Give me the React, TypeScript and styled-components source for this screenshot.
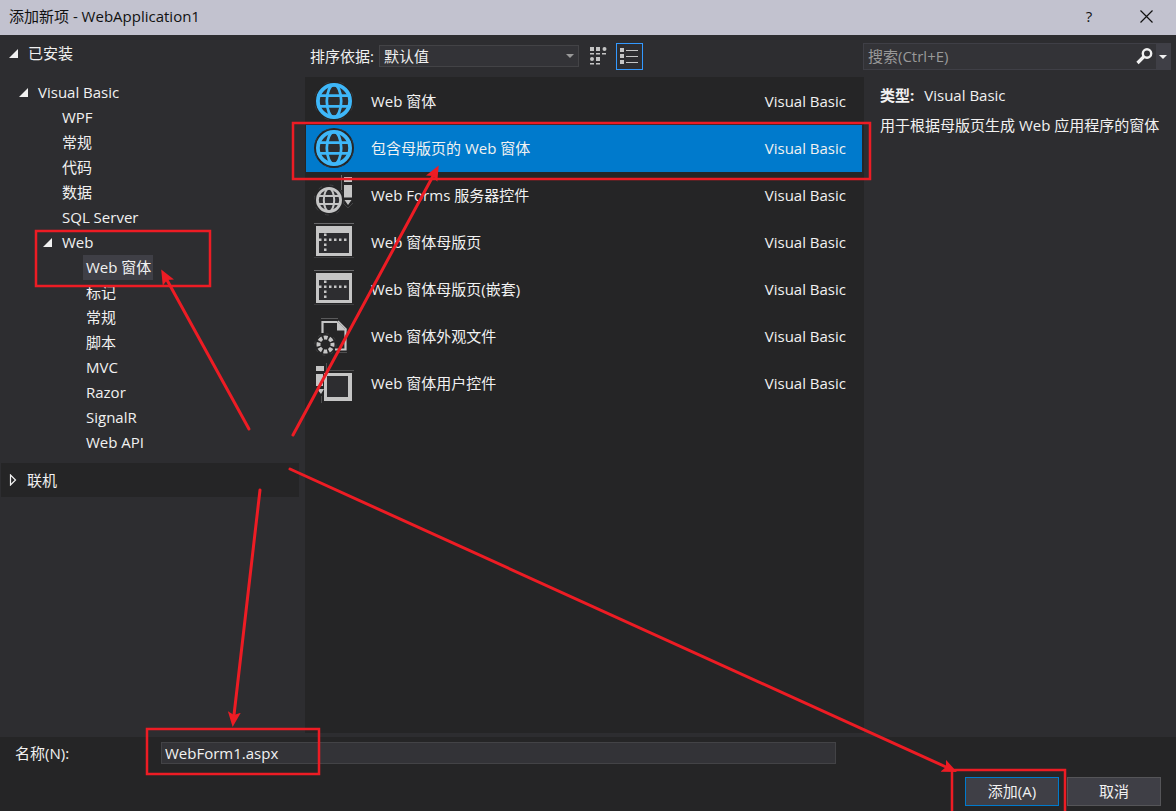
import React, { useState } from "react";
import styled, { createGlobalStyle } from "styled-components";

const GlobalStyle = createGlobalStyle`
  *, *::before, *::after { box-sizing: border-box; }
  body {
    margin: 0;
    background: #2d2d30;
    color: #f1f1f1;
    font: 15px/25px "Open Sans", "Noto Sans CJK SC", sans-serif;
  }
  button, input, select { font: inherit; color: inherit; }
  ul { list-style: none; margin: 0; padding: 0; }
  p { margin: 0; }
`;

const Dialog = styled.div`
  position: relative;
  display: flex;
  flex-direction: column;
  min-height: 100vh;
`;

const TitleBar = styled.header`
  display: flex;
  align-items: center;
  height: 35px;
  padding: 0 12px 2px 9px;
  background: #c2c2cf;
  color: #111;
`;

const Title = styled.h1`
  flex: 1;
  margin: 0;
  font-size: 15px;
  font-weight: 400;
`;

const CaptionButton = styled.button`
  display: grid;
  place-items: center;
  width: 36px;
  height: 32px;
  margin-left: 21px;
  padding: 0;
  border: 0;
  background: none;
`;

const Body = styled.main`
  flex: 1;
  display: grid;
  grid-template-columns: 305px minmax(0, 1fr) 313px;
  padding-bottom: 4px;
`;

const Sidebar = styled.nav`
  padding: 6px 6px 0 1px;
`;

const Tree = styled.ul`
  margin: 14px 0 8px;
`;

const TreeRow = styled.button<{ $indent: number }>`
  display: flex;
  align-items: center;
  height: 25px;
  padding: 0 0 0 ${(p) => p.$indent}px;
  border: 0;
  background: none;
  white-space: nowrap;
`;

const ArrowSlot = styled.span`
  display: flex;
  width: 16px;
`;

const TreeLabel = styled.span<{ $selected?: boolean }>`
  padding: 0 2px 0 3px;
  background: ${(p) => (p.$selected ? "#3f3f46" : "transparent")};
`;

const OnlineRow = styled.button`
  display: flex;
  align-items: center;
  width: 100%;
  height: 34px;
  padding: 0 0 0 7px;
  border: 0;
  background: #252526;
`;

const Center = styled.section`
  display: flex;
  flex-direction: column;
`;

const Toolbar = styled.div`
  display: flex;
  align-items: center;
  height: 42px;
  padding-left: 5px;
`;

const SelectBox = styled.div`
  position: relative;
  width: 200px;
  margin: 0 6px 0 5px;
  svg { position: absolute; right: 5px; top: 9px; pointer-events: none; }
`;

const Select = styled.select`
  display: block;
  appearance: none;
  width: 100%;
  height: 22px;
  padding: 0 20px 0 4px;
  border: 1px solid #434346;
  border-radius: 0;
  background: #333337;
  line-height: 20px;
`;

const ViewButton = styled.button<{ $active: boolean }>`
  display: grid;
  place-items: center;
  width: 27px;
  height: 27px;
  margin-right: 4px;
  padding: 0;
  border: 1px solid ${(p) => (p.$active ? "#3399ff" : "transparent")};
  background: none;
`;

const Templates = styled.ul`
  flex: 1;
  margin-right: -1px;
  padding: 1px 2px 0 1px;
  background: #252526;
`;

const TemplateRow = styled.button<{ $selected: boolean }>`
  display: flex;
  align-items: center;
  width: 100%;
  height: 47px;
  padding: 0 16px 0 8px;
  border: 0;
  background: ${(p) => (p.$selected ? "#007acc" : "transparent")};
  text-align: left;
`;

const TemplateName = styled.span`
  flex: 1;
  padding-left: 17px;
`;

const Details = styled.aside`
  padding: 8px 5px 0 0;
`;

const Search = styled.div`
  display: flex;
  height: 27px;
  border: 1px solid #3f3f46;
  background: #333337;
`;

const SearchInput = styled.input`
  flex: 1;
  min-width: 0;
  padding: 0 4px;
  border: 0;
  outline: 0;
  background: none;
  &::placeholder { color: #999; opacity: 1; }
`;

const SearchButton = styled.button<{ $width: number; $raised?: boolean }>`
  display: grid;
  place-items: center;
  width: ${(p) => p.$width}px;
  padding: 0;
  border: 0;
  background: ${(p) => (p.$raised ? "#3f3f46" : "none")};
`;

const Info = styled.div`
  display: grid;
  gap: 5px;
  padding: 13px 0 0 17px;
  white-space: nowrap;
  strong { margin-right: 10px; }
`;

const Footer = styled.footer`
  padding: 5px 15px;
  background: #252526;
`;

const NameRow = styled.div`
  display: flex;
  align-items: center;
  height: 22px;
  margin-bottom: 13px;
  padding-right: 325px;
  label { width: 146px; }
`;

const NameInput = styled.input`
  flex: 1;
  min-width: 0;
  height: 22px;
  padding: 0 3px;
  border: 1px solid #434346;
  background: #333337;
  outline: 0;
`;

const Actions = styled.div`
  display: flex;
  justify-content: flex-end;
  gap: 8px;
`;

const ActionButton = styled.button<{ $primary?: boolean }>`
  width: 94px;
  height: 29px;
  padding: 0;
  border: 1px solid ${(p) => (p.$primary ? "#007acc" : "#555558")};
  background: #3f3f46;
  line-height: 25px;
`;

const Markup = styled.svg`
  position: absolute;
  inset: 0;
  width: 100%;
  height: 100%;
  pointer-events: none;
  overflow: hidden;
`;

const Expanded = () => (
  <svg width="9" height="9" aria-hidden="true"><path d="M9 0V9H0Z" fill="#f1f1f1" /></svg>
);

const Collapsed = () => (
  <svg width="9" height="12" aria-hidden="true"><path d="M2.5 1V11L7.500 6Z" fill="none" stroke="#f1f1f1" strokeWidth="1.2" /></svg>
);

const DropArrow = ({ color }: { color: string }) => (
  <svg width="8" height="4" aria-hidden="true"><path d="M0 0H8L4 4Z" fill={color} /></svg>
);

const grey = "#c5c5c5";

function Globe({ cx, cy, r, color, weight }: { cx: number; cy: number; r: number; color: string; weight: number }) {
  const a = r * 0.3;
  const w = r * 0.93;
  return (
    <g fill="none" stroke={color}>
      <circle cx={cx} cy={cy} r={r - weight / 2} strokeWidth={weight} fill="#2d2d30" />
      <g strokeWidth={weight * 0.72}>
        <ellipse cx={cx} cy={cy} rx={r * 0.4} ry={r - weight / 2} />
        <path d={`M${cx - w} ${cy - a}H${cx + w}M${cx - w} ${cy + a}H${cx + w}`} />
      </g>
    </g>
  );
}

type IconKind = "globe" | "server" | "master" | "skin" | "control";

function TemplateIcon({ kind }: { kind: IconKind }) {
  return (
    <svg width="40" height="47" aria-hidden="true">
      {kind === "globe" && (
        <>
          <circle cx="20" cy="23" r="20" fill="#252526" />
          <circle cx="20" cy="23" r="19.5" fill="none" stroke="#424244" strokeWidth=".6" strokeDasharray="5 10.3" strokeDashoffset="-5" />
          <Globe cx={20} cy={23} r={18} color="#3eb7f9" weight={3.8} />
        </>
      )}
      {kind === "server" && (
        <>
          <path d="M27.5 3V18" stroke="#68686a" />
          <circle cx="15" cy="28" r="15" fill="none" stroke="#4b4b4d" strokeWidth=".7" strokeDasharray="4 7.8" />
          <Globe cx={15} cy={28} r={13} color={grey} weight={2.8} />
          <path d="M30 5h8v5h-8zM30 13h8v12.500h-8zM30.500 28h7L34 33z" fill={grey} />
          <path d="M30 32l4 4 5-5" fill="none" stroke="#4b4b4d" strokeWidth=".8" />
        </>
      )}
      {kind === "master" && (
        <>
          <path d="M0 4.500H40" stroke="#68686a" />
          <path d="M0 38.500H40" stroke="#3c3c3e" />
          <path d="M4 13H36V35H4Z" fill="#2d2d30" />
          <path fillRule="evenodd" fill={grey} d="M2 7H38V37H2ZM5 14V34H35V14Z" />
          <path fill={grey} d="M5 19.500h2.500v2.500H5zM10 19.500h2.500v2.500h-2.500zM15 19.500h2.500v2.500h-2.500zM20 19.500h2.500v2.500h-2.500zM25 19.500h2.500v2.500h-2.500zM30 19.500h2.500v2.500h-2.500zM10 14.500h2.500v2.500h-2.500zM10 24.500h2.500v2.500h-2.500zM10 29.500h2.500v2.500h-2.500z" />
        </>
      )}
      {kind === "skin" && (
        <>
          <path d="M7 5.500H24" stroke="#68686a" strokeWidth=".8" />
          <path d="M22 39.500H33" stroke="#59595b" strokeWidth=".8" />
          <path d="M8.500 20V9H23M31.500 16V36.500H21" fill="none" stroke={grey} strokeWidth="2.200" />
          <path d="M23 8L32.500 17.500H23Z" fill={grey} />
          <path d="M24 8l8.500 8.500" stroke={grey} strokeWidth="1.500" />
          <circle cx="11.500" cy="31.500" r="7" fill="none" stroke={grey} strokeWidth="4" strokeDasharray="3.800 1.698" strokeDashoffset="1.900" />
          <circle cx="11.500" cy="31.500" r="10.700" fill="none" stroke="#4b4b4d" strokeWidth=".6" strokeDasharray="3 5.400" />
        </>
      )}
      {kind === "control" && (
        <>
          <path d="M12 10.500H40M12.500 3V11M7.500 36V43" stroke="#59595b" strokeWidth=".8" />
          <path d="M2 6h8v5H2zM2 14h7v12H2zM3 29h7L7 34z" fill={grey} />
          <path fillRule="evenodd" fill={grey} d="M10 13H38V41H10ZM13 16V37H34V16Z" />
          <path d="M13 16H34V37H13Z" fill="#2d2d30" />
        </>
      )}
    </svg>
  );
}

const templates: { name: string; icon: IconKind }[] = [
  { name: "Web 窗体", icon: "globe" },
  { name: "包含母版页的 Web 窗体", icon: "globe" },
  { name: "Web Forms 服务器控件", icon: "server" },
  { name: "Web 窗体母版页", icon: "master" },
  { name: "Web 窗体母版页(嵌套)", icon: "master" },
  { name: "Web 窗体外观文件", icon: "skin" },
  { name: "Web 窗体用户控件", icon: "control" },
];

const tree: { label: string; level: number; open?: boolean }[] = [
  { label: "Visual Basic", level: 0, open: true },
  { label: "WPF", level: 1 },
  { label: "常规", level: 1 },
  { label: "代码", level: 1 },
  { label: "数据", level: 1 },
  { label: "SQL Server", level: 1 },
  { label: "Web", level: 1, open: true },
  { label: "Web 窗体", level: 2 },
  { label: "标记", level: 2 },
  { label: "常规", level: 2 },
  { label: "脚本", level: 2 },
  { label: "MVC", level: 2 },
  { label: "Razor", level: 2 },
  { label: "SignalR", level: 2 },
  { label: "Web API", level: 2 },
];

function Annotations() {
  return (
    <Markup viewBox="0 0 1176 811" preserveAspectRatio="none" aria-hidden="true">
      <defs>
        <marker id="head" markerUnits="userSpaceOnUse" markerWidth="16" markerHeight="14" refX="3" refY="7" orient="auto">
          <path d="M0 0.500L15 7L0 13.500L3 7Z" fill="#ed1c24" />
        </marker>
      </defs>
      <g fill="none" stroke="#ed1c24" strokeWidth="2.500">
        <rect x="36" y="231" width="174" height="55" />
        <rect x="293" y="123" width="577" height="56" />
        <rect x="147" y="729" width="172" height="45" />
        <path d="M952 812V770H1065V812" />
      </g>
      <g stroke="#ed1c24" strokeWidth="3" strokeLinecap="round">
        <path d="M249 429L167 280" markerEnd="url(#head)" />
        <path d="M293 435L433 176" markerEnd="url(#head)" />
        <path d="M290 469L946 767" markerEnd="url(#head)" />
        <path d="M260 490L234 715" markerEnd="url(#head)" />
      </g>
    </Markup>
  );
}

export default function App() {
  const [template, setTemplate] = useState(1);
  const [node, setNode] = useState(7);
  const [view, setView] = useState("list");

  return (
    <Dialog>
      <GlobalStyle />
      <TitleBar>
        <Title>添加新项 - WebApplication1</Title>
        <CaptionButton aria-label="帮助">?</CaptionButton>
        <CaptionButton aria-label="关闭">
          <svg width="13" height="13"><path d="M.5 .5L12.500 12.500M12.500 .5L.5 12.500" stroke="#111" strokeWidth="1.200" /></svg>
        </CaptionButton>
      </TitleBar>
      <Body>
        <Sidebar>
          <TreeRow $indent={8}>
            <ArrowSlot><Expanded /></ArrowSlot>
            <TreeLabel>已安装</TreeLabel>
          </TreeRow>
          <Tree>
            {tree.map((item, i) => (
              <li key={i}>
                <TreeRow $indent={18 + item.level * 24} onClick={() => setNode(i)}>
                  <ArrowSlot>{item.open && <Expanded />}</ArrowSlot>
                  <TreeLabel $selected={node === i}>{item.label}</TreeLabel>
                </TreeRow>
              </li>
            ))}
          </Tree>
          <OnlineRow>
            <ArrowSlot><Collapsed /></ArrowSlot>
            <TreeLabel>联机</TreeLabel>
          </OnlineRow>
        </Sidebar>
        <Center>
          <Toolbar>
            <label htmlFor="sort">排序依据:</label>
            <SelectBox>
              <Select id="sort"><option>默认值</option></Select>
              <DropArrow color="#999" />
            </SelectBox>
            <ViewButton $active={view === "grid"} aria-label="小图标" onClick={() => setView("grid")}>
              <svg width="17" height="19">
                <path fill={grey} d="M0 0h4v4H0zM6 0h4v4H6zM0 6h4v1.500H0zM6 6h4v1.500H6zM12 6h4v1.500h-4zM6 10h4v4H6zM0 16h4v1.500H0zM6 16h4v1.500H6z" />
                <circle cx="14.500" cy="2" r="2" fill={grey} />
                <circle cx="2" cy="12" r="2" fill={grey} />
              </svg>
            </ViewButton>
            <ViewButton $active={view === "list"} aria-label="列表" onClick={() => setView("list")}>
              <svg width="18" height="17">
                <path fill={grey} d="M0 0h4v4H0zM0 6h4v4H0zM0 12h4v4H0zM6 2h12v1H6zM6 8h12v1H6zM6 14h12v1H6z" />
              </svg>
            </ViewButton>
          </Toolbar>
          <Templates>
            {templates.map((t, i) => (
              <li key={t.name}>
                <TemplateRow $selected={template === i} onClick={() => setTemplate(i)}>
                  <TemplateIcon kind={t.icon} />
                  <TemplateName>{t.name}</TemplateName>
                  <span>Visual Basic</span>
                </TemplateRow>
              </li>
            ))}
          </Templates>
        </Center>
        <Details>
          <Search>
            <SearchInput type="search" aria-label="搜索" placeholder="搜索(Ctrl+E)" />
            <SearchButton $width={24} aria-label="开始搜索">
              <svg width="17" height="17" fill="none" stroke="#f1f1f1">
                <circle cx="11" cy="5.500" r="4.200" strokeWidth="2.400" />
                <path d="M8 8.500L1.500 15" strokeWidth="3.200" />
              </svg>
            </SearchButton>
            <SearchButton $width={14} $raised aria-label="搜索选项"><DropArrow color="#f1f1f1" /></SearchButton>
          </Search>
          <Info>
            <p><strong>类型:</strong>Visual Basic</p>
            <p>用于根据母版页生成 Web 应用程序的窗体</p>
          </Info>
        </Details>
      </Body>
      <Footer>
        <NameRow>
          <label htmlFor="name">名称(N):</label>
          <NameInput id="name" defaultValue="WebForm1.aspx" />
        </NameRow>
        <Actions>
          <ActionButton $primary>添加(A)</ActionButton>
          <ActionButton>取消</ActionButton>
        </Actions>
      </Footer>
      <Annotations />
    </Dialog>
  );
}
